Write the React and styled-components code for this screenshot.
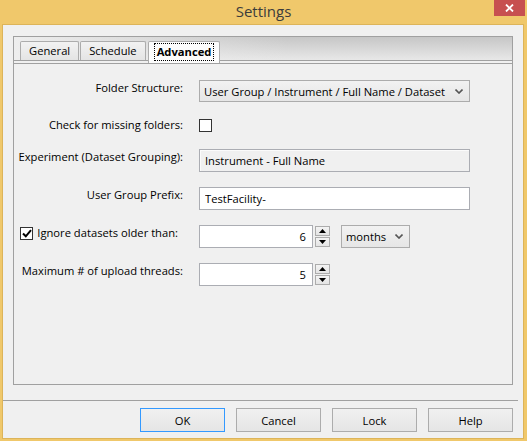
import React from 'react';
import styled, { createGlobalStyle } from 'styled-components';

const GlobalStyle = createGlobalStyle`
  html, body {
    margin: 0;
    padding: 0;
    background: #f0c86b;
  }
  * {
    box-sizing: border-box;
  }
  body {
    font-family: "Open Sans", "Noto Sans", sans-serif;
    font-size: 11.2px;
    color: #000;
  }
`;

const Window = styled.div`
  width: 527px;
  height: 441px;
  background: #f0c86b;
  display: flex;
  flex-direction: column;
  overflow: hidden;
`;

const TitleBar = styled.div`
  height: 25px;
  flex: none;
  display: grid;
  grid-template-columns: 1fr auto 1fr;
  align-items: start;
`;

const Title = styled.div`
  grid-column: 2;
  font-size: 15px;
  line-height: 22px;
  color: #3c3c3c;
`;

const CloseButton = styled.div`
  grid-column: 3;
  justify-self: end;
  width: 31px;
  height: 16px;
  margin-right: 2px;
  background: #c75050;
  display: flex;
  align-items: center;
  justify-content: center;
`;

const Client = styled.div`
  flex: 1;
  margin: 0 4px 3px 3px;
  background: #f0f0f0;
  display: flex;
  flex-direction: column;
  box-shadow: 0 0 0 1px #ddb459;
`;

const TabBox = styled.div`
  height: 349px;
  margin: 11px 10px 0 10px;
  border: 1px solid #a0a0a0;
  display: flex;
  flex-direction: column;
`;

const TabHeader = styled.div`
  height: 24px;
  flex: none;
  display: flex;
  align-items: flex-end;
  gap: 1px;
  padding-left: 6px;
  border-bottom: 1px solid #a0a0a0;
  background:
    linear-gradient(to right, rgba(238, 238, 238, 1) 0%, rgba(238, 238, 238, 0) 55%),
    linear-gradient(to bottom, #c6c6c6, #e8e8e8);
`;

const Tab = styled.div`
  position: relative;
  height: ${p => (p.$active ? '22px' : '19px')};
  margin: ${p => (p.$active ? '0 0 -3px 1px' : '0')};
  padding: ${p => (p.$active ? '1px 6px 0' : '0 8px')};
  border: 1px solid #acacac;
  border-bottom: none;
  border-radius: 2px 2px 0 0;
  background: ${p => (p.$active ? '#fcfcfc' : 'linear-gradient(to bottom, #f2f2f2, #e4e4e4)')};
  font-weight: ${p => (p.$active ? 700 : 400)};
  line-height: 17px;
  z-index: ${p => (p.$active ? 1 : 0)};
`;

const FocusText = styled.span`
  display: inline-block;
  padding: 0 2px;
  line-height: 16px;
  outline: 1px dotted #000;
  outline-offset: 0;
`;

const TabGap = styled.div`
  height: 2px;
  flex: none;
  border-bottom: 1px solid #a0a0a0;
  box-sizing: content-box;
`;

const Panel = styled.div`
  flex: 1;
  padding-top: 16px;
`;

const Form = styled.div`
  display: grid;
  grid-template-columns: 169px auto;
  grid-template-rows: 22px 17px 23px 23px 23px 23px;
  column-gap: 16px;
  row-gap: 15px;
  justify-items: start;
`;

const Label = styled.div`
  justify-self: end;
  align-self: start;
  line-height: 16px;
  white-space: nowrap;
  display: flex;
  align-items: center;
  gap: 4px;
  padding-right: ${p => (p.$pad ? '5px' : '0')};
`;

const Combo = styled.div`
  width: ${p => p.$w}px;
  height: ${p => p.$h || 22}px;
  margin-left: ${p => p.$ml || 0}px;
  border: 1px solid #acacac;
  background: linear-gradient(to bottom, #f2f2f2, #e6e6e6);
  display: flex;
  align-items: center;
  justify-content: space-between;
  padding: 0 6px 0 4px;
  white-space: nowrap;
`;

const Field = styled.input`
  width: ${p => p.$w}px;
  height: 23px;
  border: 1px solid #abadb3;
  background: ${p => (p.readOnly ? '#f0f0f0' : '#fff')};
  box-shadow: ${p => (p.readOnly ? 'inset 1px 1px 0 #fbfbfb' : 'none')};
  font: inherit;
  color: #000;
  padding: ${p => (p.$right ? '0 6px 0 0' : '0 0 0 5px')};
  text-align: ${p => (p.$right ? 'right' : 'left')};
  outline: none;
`;

const Check = styled.div`
  width: 13px;
  height: 13px;
  border: 1px solid #333;
  background: #fff;
  align-self: center;
  display: flex;
  align-items: center;
  justify-content: center;
`;

const FieldGroup = styled.div`
  display: flex;
  align-items: flex-start;
`;

const Spinner = styled.div`
  width: 15px;
  margin: 1px 0 0 2px;
  display: flex;
  flex-direction: column;
  gap: 1px;
`;

const SpinButton = styled.div`
  height: 10px;
  border: 1px solid #acacac;
  background: linear-gradient(to bottom, #f4f4f4, #e4e4e4);
  display: flex;
  align-items: center;
  justify-content: center;
`;

const Separator = styled.div`
  height: 1px;
  margin: 15px 5px 0 0;
  background: #a0a0a0;
`;

const ButtonRow = styled.div`
  display: flex;
  justify-content: flex-end;
  gap: 11px;
  margin: 7px 10px 0;
`;

const Button = styled.button`
  width: 85px;
  height: 24px;
  border: 1px solid ${p => (p.$default ? '#3399ff' : '#acacac')};
  background: linear-gradient(to bottom, #f0f0f0, #e5e5e5);
  font: inherit;
  color: #000;
  padding: 0;
`;

const Chevron = () => (
  <svg width="8" height="5" viewBox="0 0 8 5">
    <polyline points="0.5,0.5 4,4 7.5,0.5" fill="none" stroke="#555" strokeWidth="1.6" />
  </svg>
);

const Arrow = ({ up }) => (
  <svg width="7" height="4" viewBox="0 0 7 4">
    <polygon points={up ? '3.5,0 7,4 0,4' : '0,0 7,0 3.5,4'} fill="#000" />
  </svg>
);

const Spin = () => (
  <Spinner>
    <SpinButton><Arrow up /></SpinButton>
    <SpinButton><Arrow /></SpinButton>
  </Spinner>
);

const tabs = ['General', 'Schedule', 'Advanced'];
const buttons = ['OK', 'Cancel', 'Lock', 'Help'];

export default function App() {
  return (
    <Window>
      <GlobalStyle />
      <TitleBar>
        <Title>Settings</Title>
        <CloseButton>
          <svg width="9" height="8" viewBox="0 0 9 8">
            <path d="M1 0.5 L8 7.5 M8 0.5 L1 7.5" stroke="#fff" strokeWidth="1.8" />
          </svg>
        </CloseButton>
      </TitleBar>

      <Client>
        <TabBox>
          <TabHeader>
            {tabs.map(t => (
              <Tab key={t} $active={t === 'Advanced'}>
                {t === 'Advanced' ? <FocusText>{t}</FocusText> : t}
              </Tab>
            ))}
          </TabHeader>
          <TabGap />
          <Panel>
            <Form>
              <Label>Folder Structure:</Label>
              <Combo $w={271}>
                User Group / Instrument / Full Name / Dataset
                <Chevron />
              </Combo>

              <Label>Check for missing folders:</Label>
              <Check />

              <Label>Experiment (Dataset Grouping):</Label>
              <Field $w={271} readOnly defaultValue="Instrument - Full Name" />

              <Label>User Group Prefix:</Label>
              <Field $w={271} defaultValue="TestFacility-" />

              <Label $pad>
                <Check>
                  <svg width="10" height="9" viewBox="0 0 10 9">
                    <path d="M1 4.5 L3.8 7.3 L9 1.2" fill="none" stroke="#000" strokeWidth="2" />
                  </svg>
                </Check>
                Ignore datasets older than:
              </Label>
              <FieldGroup>
                <Field $w={114} $right defaultValue="6" />
                <Spin />
                <Combo $w={69} $h={23} $ml={11}>
                  months
                  <Chevron />
                </Combo>
              </FieldGroup>

              <Label>Maximum # of upload threads:</Label>
              <FieldGroup>
                <Field $w={114} $right defaultValue="5" />
                <Spin />
              </FieldGroup>
            </Form>
          </Panel>
        </TabBox>

        <Separator />
        <ButtonRow>
          {buttons.map(b => (
            <Button key={b} $default={b === 'OK'}>{b}</Button>
          ))}
        </ButtonRow>
      </Client>
    </Window>
  );
}
